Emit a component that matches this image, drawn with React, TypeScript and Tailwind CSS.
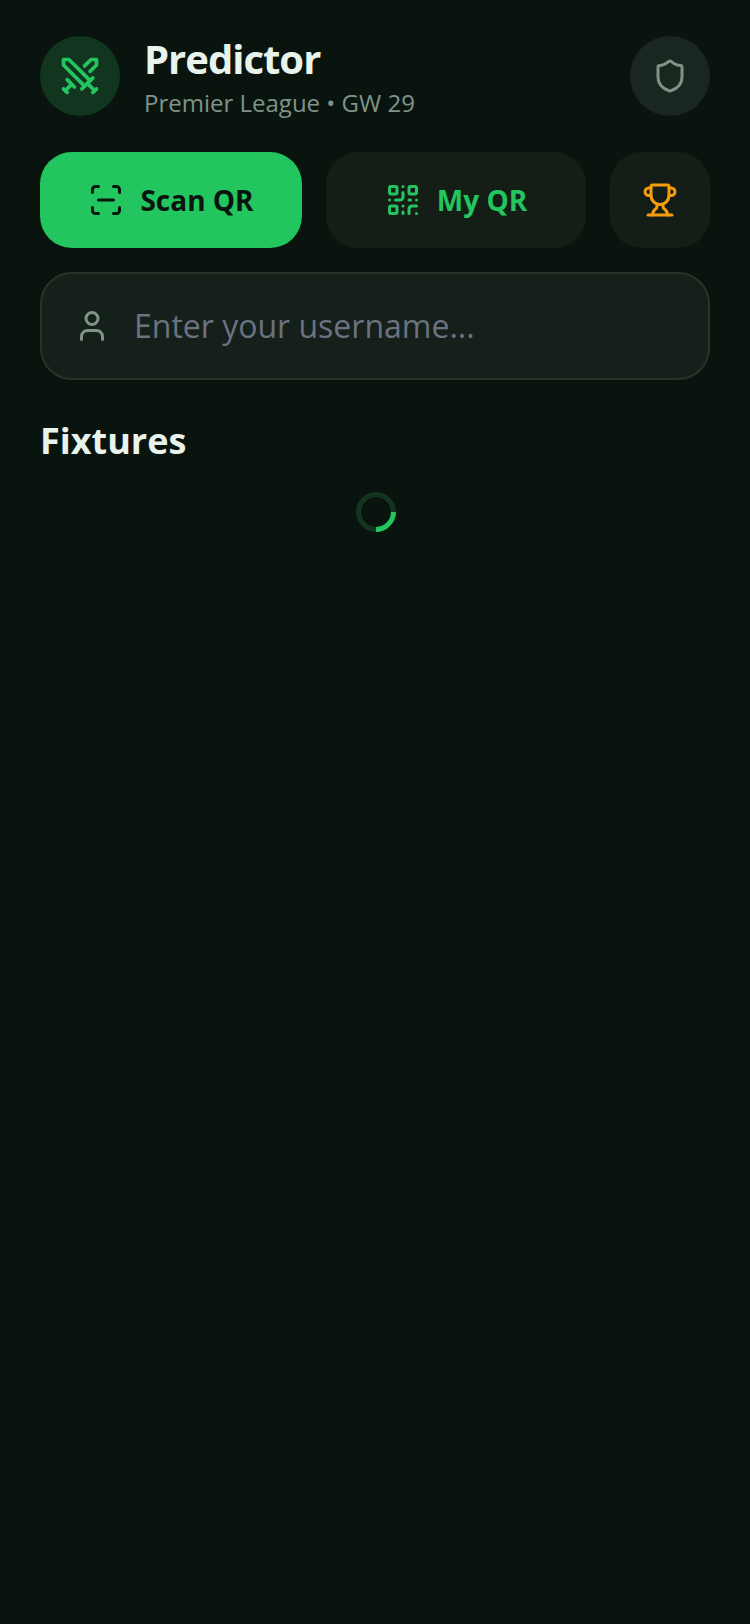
import { QrCode, ScanLine, Shield, Swords, Trophy, User } from 'lucide-react';

export default function App() {
  return (
    <div className="min-h-[1624px] bg-[#0a140f] px-10 pt-9 font-['Open_Sans',sans-serif]">
      <header className="flex h-20 items-center justify-between">
        <div className="flex h-20 items-center gap-6">
          <div className="flex h-20 w-20 items-center justify-center rounded-full bg-[#123520]">
            <Swords size={44} strokeWidth={2} className="text-[#22c55e]" />
          </div>
          <div>
            <h1 className="text-[40px] leading-[52px] font-bold tracking-tight text-[#e8f3ec]">Predictor</h1>
            <p className="mt-0.5 text-2xl leading-8 text-[#7f9389]">Premier League • GW 29</p>
          </div>
        </div>
        <button type="button" className="flex h-20 w-20 items-center justify-center rounded-full bg-[#1a2620]">
          <Shield size={36} strokeWidth={2} className="text-[#7f9389]" />
        </button>
      </header>

      <div className="mt-9 flex gap-6">
        <button
          type="button"
          className="flex h-24 w-[262px] items-center justify-center gap-4 rounded-[32px] bg-[#22c55e] text-[28px] font-bold text-[#0a140f]"
        >
          <ScanLine size={36} strokeWidth={2} />
          Scan QR
        </button>
        <button
          type="button"
          className="flex h-24 flex-1 items-center justify-center gap-4 rounded-[32px] bg-[#141e17] text-[28px] font-bold text-[#22c55e]"
        >
          <QrCode size={36} strokeWidth={2} />
          My QR
        </button>
        <button type="button" className="flex h-24 w-[100px] items-center justify-center rounded-[32px] bg-[#141e17]">
          <Trophy size={36} strokeWidth={2} className="text-[#f59e0b]" />
        </button>
      </div>

      <div className="mt-6 flex h-[108px] items-center gap-6 rounded-[32px] border-2 border-[#25352b] bg-[#15201a] px-8">
        <User size={36} strokeWidth={2} className="text-[#7f9389]" />
        <input
          className="min-w-0 flex-1 bg-transparent text-[32px] text-[#e8f3ec] outline-none placeholder:text-[#6b7280]"
          placeholder="Enter your username..."
        />
      </div>

      <h2 className="mt-[37px] text-4xl leading-[48px] font-bold text-[#e8f3ec]">Fixtures</h2>

      <div className="mt-[27px] flex justify-center pl-0.5">
        <div className="h-10 w-10 rotate-45 rounded-full border-[5px] border-[#123520] border-r-[#22c55e]" />
      </div>
    </div>
  );
}
